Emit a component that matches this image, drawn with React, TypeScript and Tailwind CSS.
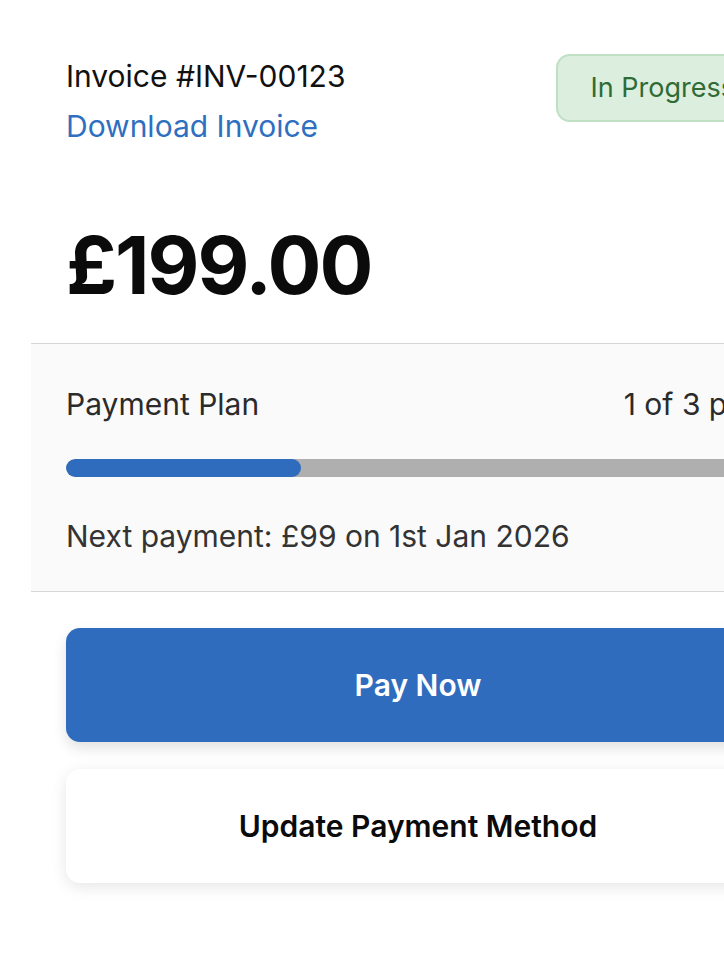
import React from "react";

export default function App() {
  const paid = 1;
  const total = 3;

  return (
    <div className="min-h-screen w-full overflow-hidden bg-white" style={{ fontFamily: "Inter, 'Noto Sans', sans-serif" }}>
      <div className="w-[836px] px-[31px]">
        <div className="px-[35px] pt-[54px] pb-[40px]">
          {/* header */}
          <div className="flex items-start justify-between">
            <div className="mt-[4px] flex flex-col gap-[14px]">
              <span className="text-[30px] leading-[36px] text-[#111111]">Invoice #INV-00123</span>
              <a href="#" className="text-[30px] leading-[36px] text-[#2f6fc0]">
                Download Invoice
              </a>
            </div>
            <span className="flex h-[68px] items-center rounded-[14px] border-2 border-[#bfe0c2] bg-[#dcefdf] px-[33px] text-[27px] text-[#2f6b36]">
              In Progress
            </span>
          </div>

          <div className="mt-[81px] text-[80px] font-bold leading-[80px] tracking-tight text-[#0b0b0c]">£199.00</div>

          {/* payment plan */}
          <div className="-mx-[35px] mt-[38px] border-y border-[#d6d6d6] bg-[#fafafa] px-[35px] pt-[42px] pb-[37px]">
            <div className="flex items-center justify-between text-[30px] leading-[36px] text-[#2b2b2b]">
              <span>Payment Plan</span>
              <span>
                {paid} of {total} paid
              </span>
            </div>
            <div className="mt-[37px] h-[18px] w-full overflow-hidden rounded-full bg-[#afafaf]">
              <div className="h-full rounded-full bg-[#2f6cbd]" style={{ width: `${(paid / total) * 100}%` }} />
            </div>
            <p className="mt-[41px] text-[30px] leading-[36px] text-[#333333]">Next payment: £99 on 1st Jan 2026</p>
          </div>

          {/* actions */}
          <div className="mt-[36px] flex flex-col gap-[27px]">
            <button className="h-[114px] w-full rounded-[14px] bg-[#2f6cbd] text-[30px] font-semibold text-white shadow-[0_6px_14px_rgba(0,0,0,0.12)]">
              Pay Now
            </button>
            <button className="h-[114px] w-full rounded-[14px] bg-white text-[30px] font-semibold text-[#0b0b0c] shadow-[0_4px_16px_rgba(0,0,0,0.10)]">
              Update Payment Method
            </button>
          </div>
        </div>
      </div>
    </div>
  );
}
